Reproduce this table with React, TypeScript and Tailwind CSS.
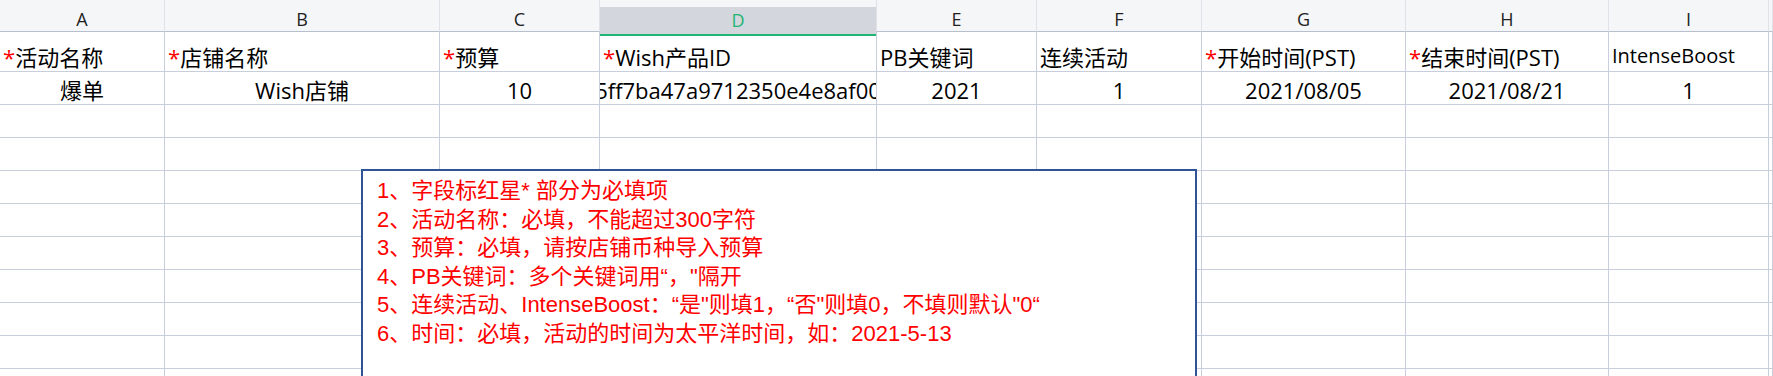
type Col = { key: string; head: string; required?: boolean; value: string; small?: boolean };

const columns: Col[] = [
  { key: "A", head: "活动名称", required: true, value: "爆单" },
  { key: "B", head: "店铺名称", required: true, value: "Wish店铺" },
  { key: "C", head: "预算", required: true, value: "10" },
  { key: "D", head: "Wish产品ID", required: true, value: "5ff7ba47a9712350e4e8af00" },
  { key: "E", head: "PB关键词", value: "2021" },
  { key: "F", head: "连续活动", value: "1" },
  { key: "G", head: "开始时间(PST)", required: true, value: "2021/08/05" },
  { key: "H", head: "结束时间(PST)", required: true, value: "2021/08/21" },
  { key: "I", head: "IntenseBoost", value: "1", small: true },
  { key: "J", head: "", value: "" },
];

const notes = [
  "1、字段标红星* 部分为必填项",
  "2、活动名称：必填，不能超过300字符",
  "3、预算：必填，请按店铺币种导入预算",
  "4、PB关键词：多个关键词用“，\"隔开",
  "5、连续活动、IntenseBoost：“是\"则填1，“否\"则填0，不填则默认\"0“",
  "6、时间：必填，活动的时间为太平洋时间，如：2021-5-13",
];

const gridCols = "grid grid-cols-[165px_275px_160px_277px_160px_165px_204px_203px_160px_1fr]";
const emptyRows = 9;

// full-width punctuation keeps its whole em box
function NoteLine({ text }: { text: string }) {
  const parts = text.split(/([、：，])/).filter(Boolean);
  return (
    <div className="whitespace-nowrap">
      {parts.map((p, i) =>
        "、：，".includes(p) ? (
          <span key={i} className="inline-block w-[1em]">
            {p}
          </span>
        ) : (
          <span key={i}>{p}</span>
        )
      )}
    </div>
  );
}

export default function App() {
  return (
    <div className="relative h-[376px] w-[1773px] overflow-hidden bg-white font-['Open_Sans','Noto_Sans_CJK_SC',sans-serif] text-black">
      {/* column letters */}
      <div className={gridCols}>
        {columns.map((c) =>
          c.key === "D" ? (
            <div key={c.key} className="flex h-[32px] flex-col border-r border-b border-r-[#dfe2e8] border-b-[#b7bfcc] bg-[#f5f6f7] pt-[7px]">
              <div className="flex flex-1 items-center justify-center border-b-2 border-[#21b573] bg-[#d3d6dd] text-[18px] text-[#21b573]">
                {c.key}
              </div>
            </div>
          ) : (
            <div
              key={c.key}
              className="flex h-[32px] items-center justify-center border-r border-b border-r-[#dfe2e8] border-b-[#b7bfcc] bg-[#f5f6f7] pt-[7px] text-[18px] text-[#1f1f1f]"
            >
              {c.key !== "J" && c.key}
            </div>
          )
        )}
      </div>

      {/* header row */}
      <div className={gridCols}>
        {columns.map((c) => (
          <div
            key={c.key}
            className="flex h-[40px] items-end overflow-hidden whitespace-nowrap border-r border-b border-[#c8cedb] pl-[3px] leading-[28px]"
          >
            <span className={c.small ? "pb-[1px] text-[20px]" : "text-[22px]"}>
              {c.required && <span className="text-[#ff0000]">*</span>}
              {c.head}
            </span>
          </div>
        ))}
      </div>

      {/* data row */}
      <div className={gridCols}>
        {columns.map((c) => (
          <div
            key={c.key}
            className="flex h-[33px] items-end justify-center overflow-hidden whitespace-nowrap border-r border-b border-[#c8cedb] text-[22px] leading-[28px]"
          >
            <span className="shrink-0">{c.value}</span>
          </div>
        ))}
      </div>

      {Array.from({ length: emptyRows }).map((_, r) => (
        <div key={r} className={gridCols}>
          {columns.map((c) => (
            <div key={c.key} className="h-[33px] border-r border-b border-[#c8cedb]" />
          ))}
        </div>
      ))}

      {/* comment box */}
      <div className="absolute left-[361px] top-[169px] h-[260px] w-[836px] border-2 border-[#2f5496] bg-white pl-[14px] pt-[6px] font-['Liberation_Sans','Noto_Sans_CJK_SC',sans-serif] text-[22px] leading-[28.6px] text-[#ff0000]">
        {notes.map((n) => (
          <NoteLine key={n} text={n} />
        ))}
      </div>
    </div>
  );
}
